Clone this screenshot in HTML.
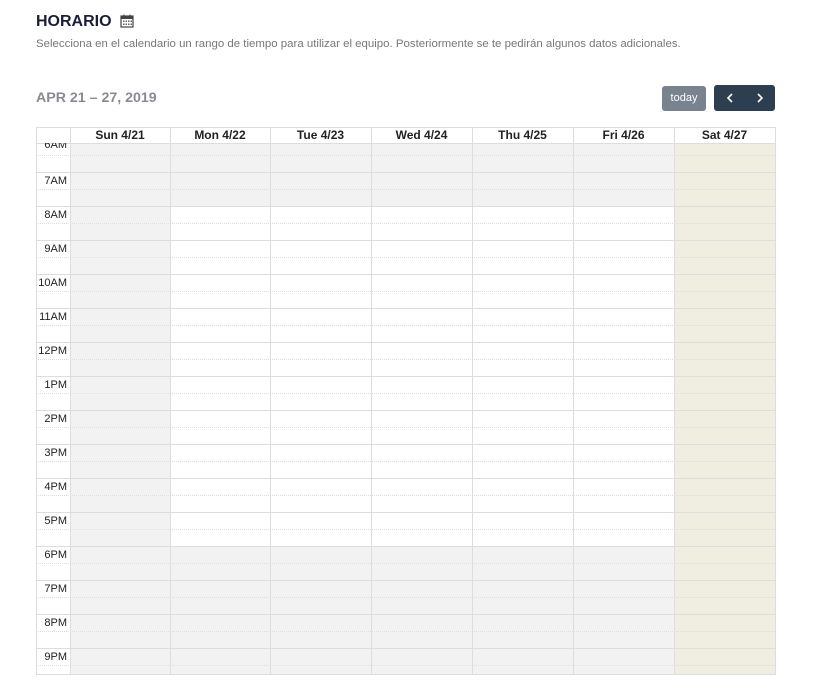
<!DOCTYPE html>
<html><head><meta charset="utf-8"><style>
*{box-sizing:border-box;margin:0;padding:0}
body{width:820px;height:690px;background:#fff;font-family:"Liberation Sans",sans-serif;position:relative;overflow:hidden}
.a{position:absolute}
.hl{position:absolute;left:36px;width:739px;height:1px;background:#ddd}
.dl{position:absolute;left:36px;width:739px;height:0;border-top:1px dotted #ddd}
.vl{position:absolute;top:127px;height:547px;width:1px;background:#ddd}
.lab{position:absolute;left:36px;width:31px;text-align:right;font-size:11px;color:#222;line-height:18px}
.hd{position:absolute;top:127px;height:16px;line-height:16px;text-align:center;font-size:12px;font-weight:bold;color:#222}
</style></head><body>
<div class="a" style="left:36px;top:13px;font-size:16px;font-weight:bold;color:#1c1c3c">HORARIO</div>
<svg class="a" style="left:120px;top:14px" width="14" height="14" viewBox="0 0 14 14"><rect x="1" y="2" width="12" height="11" fill="#fff" stroke="#444" stroke-width="1.2"/><rect x="1" y="2" width="12" height="3" fill="#444"/><line x1="4" y1="0.5" x2="4" y2="3" stroke="#444"/><line x1="10" y1="0.5" x2="10" y2="3" stroke="#444"/><g fill="#666"><rect x="3" y="6.5" width="1.5" height="1.5"/><rect x="5.5" y="6.5" width="1.5" height="1.5"/><rect x="8" y="6.5" width="1.5" height="1.5"/><rect x="10.5" y="6.5" width="1.5" height="1.5"/><rect x="3" y="9.5" width="1.5" height="1.5"/><rect x="5.5" y="9.5" width="1.5" height="1.5"/><rect x="8" y="9.5" width="1.5" height="1.5"/><rect x="10.5" y="9.5" width="1.5" height="1.5"/></g></svg>
<div class="a" style="left:36px;top:38px;font-size:11.45px;color:#777;white-space:nowrap">Selecciona en el calendario un rango de tiempo para utilizar el equipo. Posteriormente se te pedirán algunos datos adicionales.</div>
<div class="a" style="left:36px;top:90px;font-size:14.2px;font-weight:bold;color:#8a8a95">APR 21 – 27, 2019</div>
<div class="a" style="left:662px;top:86px;width:44px;height:25px;background:#78838f;border-radius:3px;color:#fff;font-size:11px;line-height:25px;text-align:center">today</div>
<div class="a" style="left:714px;top:85px;width:61px;height:26px;background:#2c3e50;border-radius:3px"></div>
<svg class="a" style="left:714px;top:85px" width="61" height="26"><path d="M18 9 L14 13 L18 17" fill="none" stroke="#fff" stroke-width="1.6"/><path d="M44 9 L48 13 L44 17" fill="none" stroke="#fff" stroke-width="1.6"/></svg>
<div class="a" style="left:36px;top:127px;width:740px;height:548px;border:1px solid #ddd"></div>
<div class="a" style="left:70px;top:143px;width:604px;height:63px;background:#f2f2f2"></div>
<div class="a" style="left:70px;top:546px;width:604px;height:128px;background:#f2f2f2"></div>
<div class="a" style="left:70px;top:143px;width:100px;height:531px;background:#f2f2f2"></div>
<div class="a" style="left:674px;top:143px;width:101px;height:531px;background:#f0ede1"></div>
<div class="hl" style="top:143px"></div>
<div class="hl" style="top:172px"></div><div class="hl" style="top:206px"></div><div class="hl" style="top:240px"></div><div class="hl" style="top:274px"></div><div class="hl" style="top:308px"></div><div class="hl" style="top:342px"></div><div class="hl" style="top:376px"></div><div class="hl" style="top:410px"></div><div class="hl" style="top:444px"></div><div class="hl" style="top:478px"></div><div class="hl" style="top:512px"></div><div class="hl" style="top:546px"></div><div class="hl" style="top:580px"></div><div class="hl" style="top:614px"></div><div class="hl" style="top:648px"></div>
<div class="dl" style="top:155px"></div><div class="dl" style="top:189px"></div><div class="dl" style="top:223px"></div><div class="dl" style="top:257px"></div><div class="dl" style="top:291px"></div><div class="dl" style="top:325px"></div><div class="dl" style="top:359px"></div><div class="dl" style="top:393px"></div><div class="dl" style="top:427px"></div><div class="dl" style="top:461px"></div><div class="dl" style="top:495px"></div><div class="dl" style="top:529px"></div><div class="dl" style="top:563px"></div><div class="dl" style="top:597px"></div><div class="dl" style="top:631px"></div><div class="dl" style="top:665px"></div>
<div class="vl" style="left:70px"></div><div class="vl" style="left:170px"></div><div class="vl" style="left:270px"></div><div class="vl" style="left:371px"></div><div class="vl" style="left:472px"></div><div class="vl" style="left:573px"></div><div class="vl" style="left:674px"></div>
<div class="a" style="left:36px;top:143px;width:34px;height:531px;overflow:hidden">
<div class="lab" style="left:0;top:-7px">6AM</div>
</div>
<div class="lab" style="top:172px">7AM</div><div class="lab" style="top:206px">8AM</div><div class="lab" style="top:240px">9AM</div><div class="lab" style="top:274px">10AM</div><div class="lab" style="top:308px">11AM</div><div class="lab" style="top:342px">12PM</div><div class="lab" style="top:376px">1PM</div><div class="lab" style="top:410px">2PM</div><div class="lab" style="top:444px">3PM</div><div class="lab" style="top:478px">4PM</div><div class="lab" style="top:512px">5PM</div><div class="lab" style="top:546px">6PM</div><div class="lab" style="top:580px">7PM</div><div class="lab" style="top:614px">8PM</div><div class="lab" style="top:648px">9PM</div>
<div class="hd" style="left:70px;width:100px">Sun 4/21</div><div class="hd" style="left:170px;width:100px">Mon 4/22</div><div class="hd" style="left:270px;width:101px">Tue 4/23</div><div class="hd" style="left:371px;width:101px">Wed 4/24</div><div class="hd" style="left:472px;width:101px">Thu 4/25</div><div class="hd" style="left:573px;width:101px">Fri 4/26</div><div class="hd" style="left:674px;width:101px">Sat 4/27</div>
</body></html>
